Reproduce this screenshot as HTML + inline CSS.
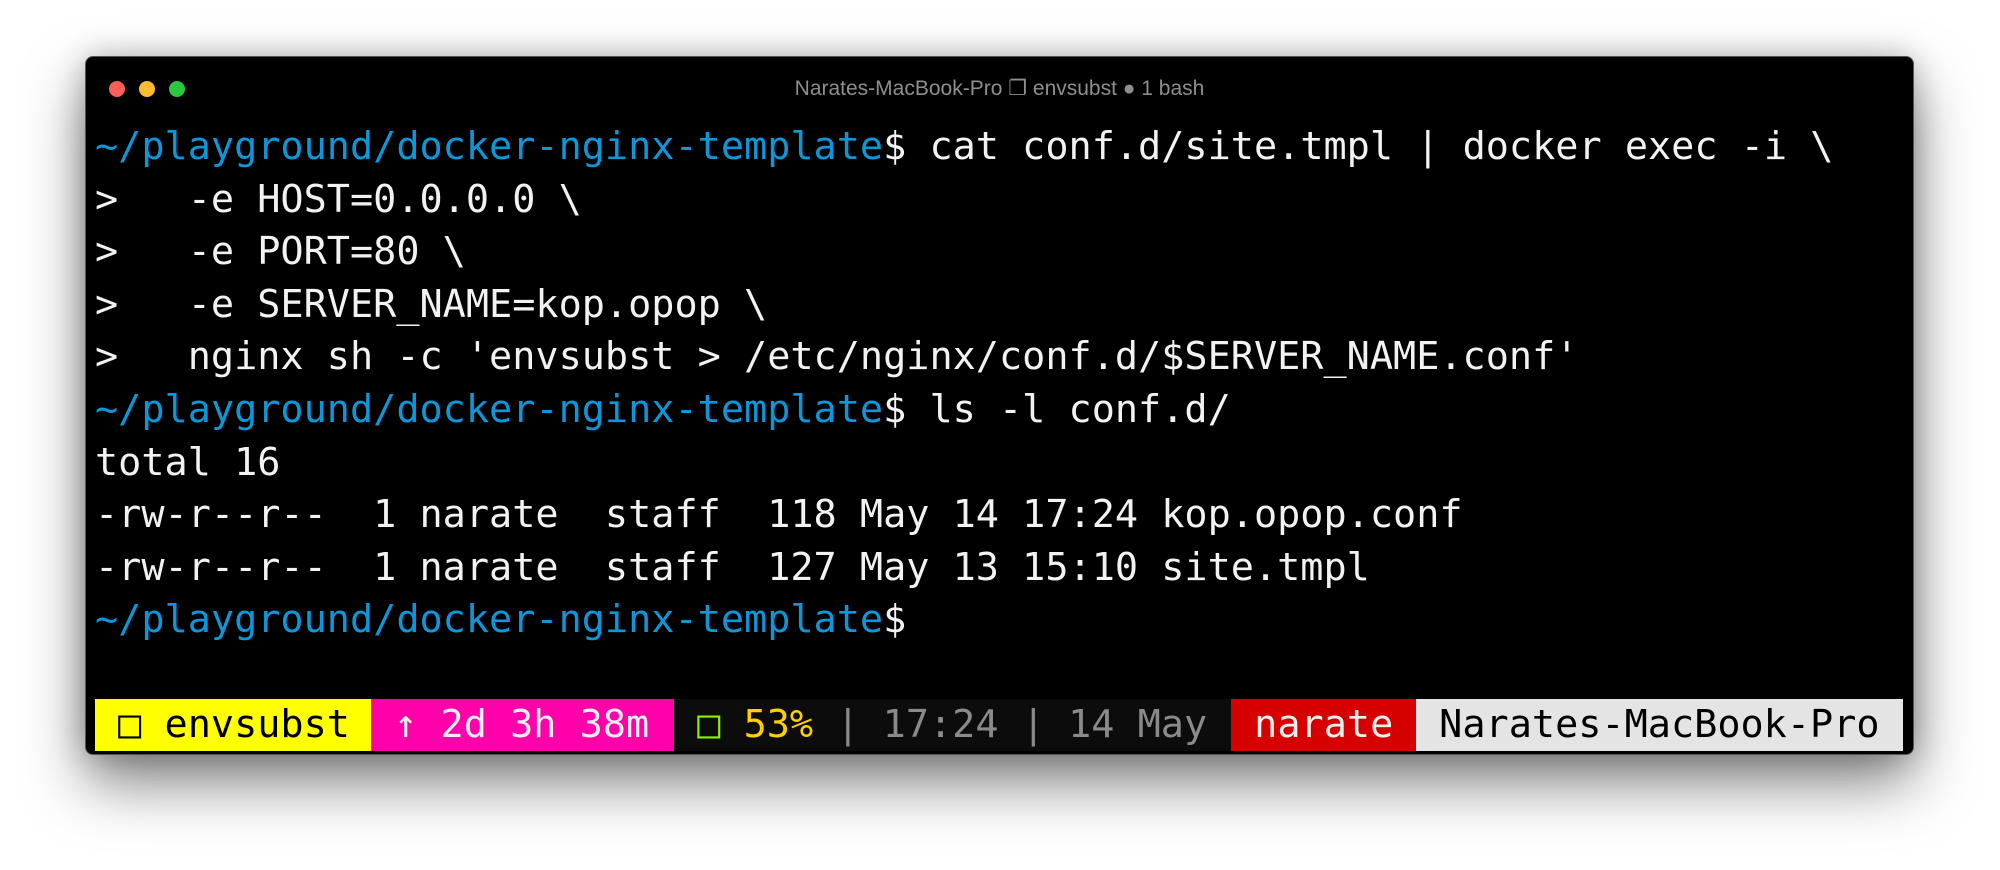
<!DOCTYPE html>
<html><head><meta charset="utf-8"><style>
html,body{margin:0;padding:0;background:#fff;width:2000px;height:870px;overflow:hidden}
.win{position:absolute;left:86px;top:57px;width:1827px;height:697px;background:#000;border-radius:7px;box-shadow:0 0 0 1px #555,0 28px 60px rgba(0,0,0,.5),0 0 30px rgba(0,0,0,.25);overflow:hidden}
.dot{position:absolute;top:24px;width:16px;height:16px;border-radius:50%}
.title{position:absolute;left:0;width:100%;top:19px;text-align:center;font:21px "Liberation Sans",sans-serif;color:#8e8e8e}
pre{position:absolute;left:9px;top:64px;margin:0;font:38.5px/52.6px "DejaVu Sans Mono","Liberation Mono",monospace;color:#f2f2f2;white-space:pre}
.b{color:#0b97d9}
.sb{position:absolute;left:9px;top:642px;height:52px;width:1808px;font:38.5px/52px "DejaVu Sans Mono","Liberation Mono",monospace;white-space:pre;display:flex}
.sb span{display:block;height:52px}
</style></head><body>
<div class="win">
<div class="dot" style="left:23px;background:#fe5f57"></div>
<div class="dot" style="left:53px;background:#febc2e"></div>
<div class="dot" style="left:83px;background:#28c840"></div>
<div class="title">Narates-MacBook-Pro ❐ envsubst ● 1 bash</div>
<pre><span class="b">~/playground/docker-nginx-template</span>$ cat conf.d/site.tmpl | docker exec -i \
&gt;   -e HOST=0.0.0.0 \
&gt;   -e PORT=80 \
&gt;   -e SERVER_NAME=kop.opop \
&gt;   nginx sh -c 'envsubst &gt; /etc/nginx/conf.d/$SERVER_NAME.conf'
<span class="b">~/playground/docker-nginx-template</span>$ ls -l conf.d/
total 16
-rw-r--r--  1 narate  staff  118 May 14 17:24 kop.opop.conf
-rw-r--r--  1 narate  staff  127 May 13 15:10 site.tmpl
<span class="b">~/playground/docker-nginx-template</span>$</pre>
<div class="sb">
<span style="background:#ffff00;color:#000;width:276px"> □ envsubst </span>
<span style="background:#ff00aa;color:#eee;width:303px"> ↑ 2d 3h 38m </span>
<span style="background:#0c0c0c;color:#8a8a8a;width:557px"> <span style="display:inline;color:#8fef00">□</span> <span style="display:inline;color:#ffcf00">53%</span> | 17:24 | 14 May </span>
<span style="background:#d70000;color:#eee;width:185px"> narate </span>
<span style="background:#e4e4e4;color:#000;width:487px"> Narates-MacBook-Pro </span>
</div>
</div>
</body></html>
